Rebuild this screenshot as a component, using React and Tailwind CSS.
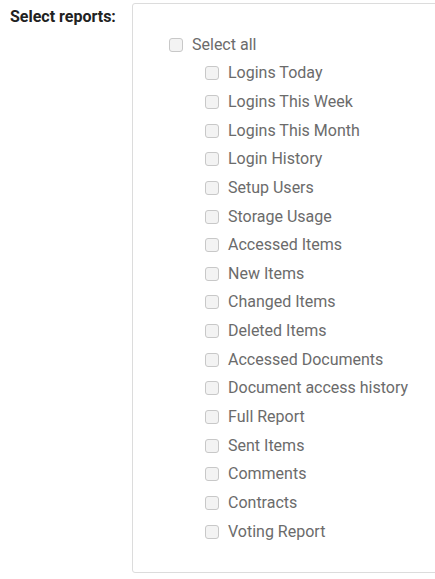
const reports = [
  "Logins Today",
  "Logins This Week",
  "Logins This Month",
  "Login History",
  "Setup Users",
  "Storage Usage",
  "Accessed Items",
  "New Items",
  "Changed Items",
  "Deleted Items",
  "Accessed Documents",
  "Document access history",
  "Full Report",
  "Sent Items",
  "Comments",
  "Contracts",
  "Voting Report",
];

function Box() {
  return (
    <span className="block w-[14px] h-[14px] shrink-0 rounded-[3px] border border-[#c8c8c8] bg-[#f3f3f3]" />
  );
}

export default function App() {
  return (
    <div className="flex bg-white w-[435px] h-[579px] overflow-hidden" style={{ fontFamily: "Roboto, 'Liberation Sans', sans-serif" }}>
      <div className="w-[132px] shrink-0 pl-[10px] pt-[5px] text-[16px] font-bold text-[#222]">
        Select reports:
      </div>
      <div className="mt-[3px] h-[570px] w-[310px] shrink-0 rounded-[3px] border border-[#dcdcdc] pt-[26px] pl-[36px] text-[16px] text-[#6b6b6b]">
        <label className="flex h-[29px] items-center gap-[9px]">
          <Box />
          <span>Select all</span>
        </label>
        <div className="pl-[36px]">
          {reports.map((r) => (
            <label key={r} className="flex h-[28.65px] items-center gap-[9px]">
              <Box />
              <span>{r}</span>
            </label>
          ))}
        </div>
      </div>
    </div>
  );
}
